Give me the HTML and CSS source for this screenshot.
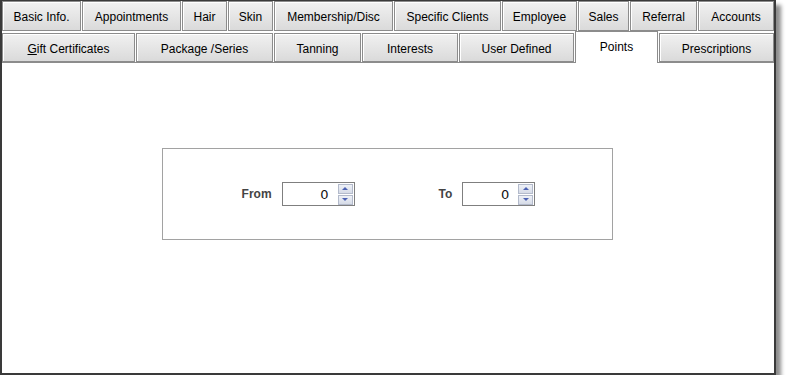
FILE: index.html
```html
<!DOCTYPE html>
<html lang="en">
<head>
    <meta charset="UTF-8">
    <meta name="viewport" content="width=device-width, initial-scale=1.0">
    <title>Client Search - Points</title>
    <link rel="stylesheet" href="styles.css">
</head>
<body>
    <div class="window">
        <div class="tab-row">
            <div class="tab" style="width: 79px">Basic Info.</div>
            <div class="tab" style="width: 99px">Appointments</div>
            <div class="tab" style="width: 45px">Hair</div>
            <div class="tab" style="width: 45px">Skin</div>
            <div class="tab" style="width: 119px">Membership/Disc</div>
            <div class="tab" style="width: 107px">Specific Clients</div>
            <div class="tab" style="width: 75px">Employee</div>
            <div class="tab" style="width: 51px">Sales</div>
            <div class="tab" style="width: 67px">Referral</div>
            <div class="tab" style="width: 76px">Accounts</div>
        </div>
        <div class="tab-row lower">
            <div class="tab" style="width: 133px"><u>G</u>ift Certificates</div>
            <div class="tab" style="width: 137px">Package /Series</div>
            <div class="tab" style="width: 87px">Tanning</div>
            <div class="tab" style="width: 96px">Interests</div>
            <div class="tab" style="width: 115px">User Defined</div>
            <div class="tab active" style="width: 83px">Points</div>
            <div class="tab" style="width: 115px">Prescriptions</div>
        </div>
        <div class="pane">
            <div class="range-box">
                <div class="field">
                    <label>From</label>
                    <div class="spinner">
                        <span class="value">0</span>
                        <div class="spin-btns">
                            <span class="spin up"></span>
                            <span class="spin down"></span>
                        </div>
                    </div>
                </div>
                <div class="field">
                    <label>To</label>
                    <div class="spinner">
                        <span class="value">0</span>
                        <div class="spin-btns">
                            <span class="spin up"></span>
                            <span class="spin down"></span>
                        </div>
                    </div>
                </div>
            </div>
        </div>
    </div>
</body>
</html>
```

FILE: styles.css
```css
*{
    margin: 0;
    padding: 0;
    box-sizing: border-box;
}

body{
    background: #fff;
    font-family: "Liberation Sans", Arial, sans-serif;
    font-size: 12px;
    color: #000;
}

.window{
    width: 776px;
    height: 375px;
    border: 2px solid #3a3a3a;
    border-top-width: 1px;
    background: #fff;
    box-shadow: 5px 5px 4px rgba(0, 0, 0, 0.45);
    display: flex;
    flex-direction: column;
}

.tab-row{
    display: flex;
    gap: 1px;
    height: 30px;
    margin-bottom: 1px;
}

.tab-row.lower{
    height: 31px;
    margin-bottom: 0;
    align-items: flex-end;
    border-bottom: 1px solid #8c8c8c;
}

.tab{
    height: 30px;
    border: 1px solid #8c8c8c;
    background: linear-gradient(#f1f1f1, #dadada);
    box-shadow: inset 1px 1px 0 #fff;
    display: flex;
    align-items: center;
    justify-content: center;
    padding-top: 1px;
    white-space: nowrap;
}

.tab-row.lower .tab{
    height: 29px;
    padding-top: 2px;
}

.tab-row.lower .tab.active{
    position: relative;
    height: 32px;
    margin-bottom: -1px;
    border-bottom: none;
    background: #fff;
    box-shadow: none;
    align-items: flex-start;
    padding-top: 8px;
}

.pane{
    flex: 1;
    background: #fff;
}

.range-box{
    width: 451px;
    height: 92px;
    margin: 85px 0 0 160px;
    border: 1px solid #a2a2a2;
    display: flex;
    align-items: center;
    justify-content: center;
    gap: 84px;
    padding-left: 2px;
}

.field{
    display: flex;
    align-items: center;
    gap: 10px;
}

.field label{
    font-weight: bold;
    color: #444;
}

.spinner{
    width: 73px;
    height: 24px;
    border: 1px solid #7f7f7f;
    background: #fff;
    display: flex;
    align-items: center;
    justify-content: flex-end;
    padding-right: 1px;
}

.spinner .value{
    font-family: "DejaVu Sans", sans-serif;
    font-size: 13px;
    color: #111;
    margin-right: 9px;
}

.spin-btns{
    display: flex;
    flex-direction: column;
    gap: 1px;
}

.spin{
    width: 15px;
    height: 10px;
    border: 1px solid #b3bacb;
    background: linear-gradient(#eef1f7, #d6dbe7);
    display: flex;
    align-items: center;
    justify-content: center;
}

.spin::after{
    content: "";
    border-left: 3px solid transparent;
    border-right: 3px solid transparent;
}

.spin.up::after{
    border-bottom: 3px solid #4d62b3;
}

.spin.down::after{
    border-top: 3px solid #4d62b3;
}
```
